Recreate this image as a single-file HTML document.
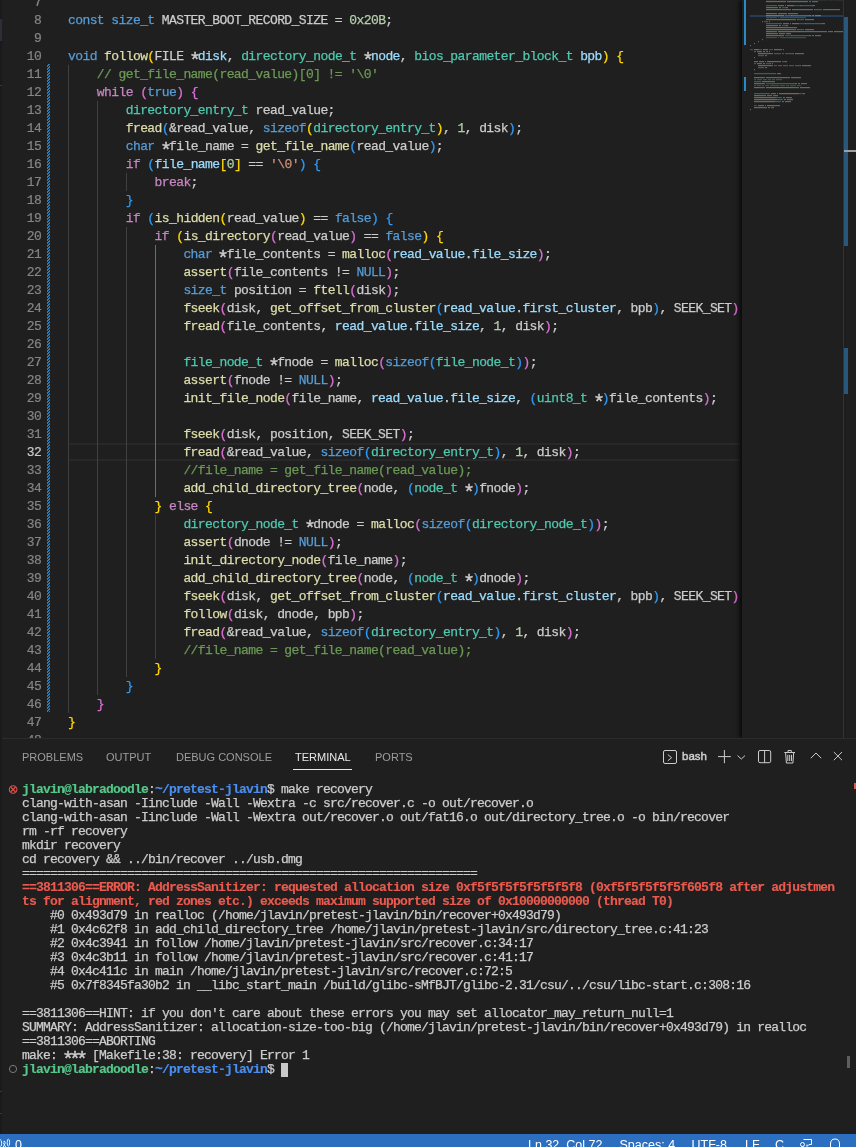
<!DOCTYPE html>
<html><head><meta charset="utf-8">
<style>
*{margin:0;padding:0;box-sizing:border-box}
html,body{width:856px;height:1147px;overflow:hidden;background:#1f1f1f}
body{position:relative;will-change:transform;font-family:"Liberation Sans",sans-serif}
.abs{position:absolute}
#editor{position:absolute;left:0;top:0;width:856px;height:738px;background:#1f1f1f;overflow:hidden}
.ln{position:absolute;left:0;width:41.2px;text-align:right;font-family:"Liberation Mono",monospace;font-size:13px;letter-spacing:-0.6px;color:#858585;height:18px;line-height:18px;-webkit-text-stroke:0.2px}
.ln.cur{color:#cccccc}
#code{position:absolute;left:68px;top:1px;width:672px;height:737px;overflow:hidden}
.cl{position:absolute;left:0;white-space:pre;font-family:"Liberation Mono",monospace;font-size:13px;letter-spacing:-0.59px;height:18px;line-height:18px;color:#cccccc;-webkit-text-stroke:0.25px}
.k{color:#569cd6}.c{color:#c586c0}.t{color:#4ec9b0}.f{color:#dcdcaa}.v{color:#9cdcfe}.n{color:#b5cea8}.s{color:#ce9178}.m{color:#6a9955}
.b1{color:#ffd700}.b2{color:#da70d6}.b3{color:#2f9bf5}
.ast{display:inline-block;transform:translateY(5.5px) scale(1.55)}.guide{position:absolute;width:1px;background:#404040}
#panel{position:absolute;left:0;top:738px;width:856px;height:396px;background:#1f1f1f;border-top:1px solid #2b2b2b}
.tab{position:absolute;top:11px;font-size:11px;color:#9d9d9d;line-height:14px}
.tl{position:absolute;left:22px;white-space:pre;font-family:"Liberation Mono",monospace;font-size:13px;letter-spacing:-0.8px;height:14px;line-height:14px;color:#cccccc;-webkit-text-stroke:0.25px}
.g{color:#55c88a;font-weight:bold;-webkit-text-stroke:0.15px}.bl{color:#4a8ef0;font-weight:bold;-webkit-text-stroke:0.15px}.r{color:#eb5a4e;font-weight:bold;-webkit-text-stroke:0.15px}.tcur{display:inline-block;width:7px;height:14px;background:#c8c8c8;vertical-align:top}
#status{position:absolute;left:0;top:1134px;width:856px;height:13px;background:#2c6ec0;color:#fff;font-size:12px}
</style></head><body>
<div id="editor"><div class="ln" style="top:-6px">7</div><div class="ln" style="top:12px">8</div><div class="ln" style="top:30px">9</div><div class="ln" style="top:48px">10</div><div class="ln" style="top:66px">11</div><div class="ln" style="top:84px">12</div><div class="ln" style="top:102px">13</div><div class="ln" style="top:120px">14</div><div class="ln" style="top:138px">15</div><div class="ln" style="top:156px">16</div><div class="ln" style="top:174px">17</div><div class="ln" style="top:192px">18</div><div class="ln" style="top:210px">19</div><div class="ln" style="top:228px">20</div><div class="ln" style="top:246px">21</div><div class="ln" style="top:264px">22</div><div class="ln" style="top:282px">23</div><div class="ln" style="top:300px">24</div><div class="ln" style="top:318px">25</div><div class="ln" style="top:336px">26</div><div class="ln" style="top:354px">27</div><div class="ln" style="top:372px">28</div><div class="ln" style="top:390px">29</div><div class="ln" style="top:408px">30</div><div class="ln" style="top:426px">31</div><div class="ln cur" style="top:444px">32</div><div class="ln" style="top:462px">33</div><div class="ln" style="top:480px">34</div><div class="ln" style="top:498px">35</div><div class="ln" style="top:516px">36</div><div class="ln" style="top:534px">37</div><div class="ln" style="top:552px">38</div><div class="ln" style="top:570px">39</div><div class="ln" style="top:588px">40</div><div class="ln" style="top:606px">41</div><div class="ln" style="top:624px">42</div><div class="ln" style="top:642px">43</div><div class="ln" style="top:660px">44</div><div class="ln" style="top:678px">45</div><div class="ln" style="top:696px">46</div><div class="ln" style="top:714px">47</div><div class="ln" style="top:732px">48</div><div class="abs" style="left:68px;top:443px;width:672px;height:18px;border-top:2px solid #282828;border-bottom:2px solid #282828"></div><div class="guide" style="left:68px;top:65px;height:648px;background:#404040"></div><div class="guide" style="left:97px;top:101px;height:594px;background:#404040"></div><div class="guide" style="left:126px;top:173px;height:18px;background:#404040"></div><div class="guide" style="left:126px;top:227px;height:450px;background:#404040"></div><div class="guide" style="left:155px;top:245px;height:252px;background:#6e6e6e"></div><div class="guide" style="left:155px;top:515px;height:144px;background:#404040"></div><div class="abs" style="left:47px;top:64px;width:3px;height:648px;background:repeating-linear-gradient(-45deg,#2b7cb8 0 1.2px,#1f1f1f 1.2px 2.12px)"></div><div id="code"><div class="cl" style="top:-7px"></div><div class="cl" style="top:11px"><span class="k">const</span> <span class="k">size_t</span> MASTER_BOOT_RECORD_SIZE = <span class="n">0x20B</span>;</div><div class="cl" style="top:29px"></div><div class="cl" style="top:47px"><span class="k">void</span> <span class="f">follow</span><span class="b1">(</span>FILE <span class="ast">*</span><span class="v">disk</span>, <span class="t">directory_node_t</span> <span class="ast">*</span><span class="v">node</span>, <span class="t">bios_parameter_block_t</span> <span class="v">bpb</span><span class="b1">)</span> <span class="b1">{</span></div><div class="cl" style="top:65px">    <span class="m">// get_file_name(read_value)[0] != '\0'</span></div><div class="cl" style="top:83px">    <span class="c">while</span> <span class="b2">(</span><span class="k">true</span><span class="b2">)</span> <span class="b2">{</span></div><div class="cl" style="top:101px">        <span class="t">directory_entry_t</span> read_value;</div><div class="cl" style="top:119px">        <span class="f">fread</span><span class="b3">(</span>&amp;read_value, <span class="k">sizeof</span><span class="b1">(</span><span class="t">directory_entry_t</span><span class="b1">)</span>, <span class="n">1</span>, disk<span class="b3">)</span>;</div><div class="cl" style="top:137px">        <span class="k">char</span> <span class="ast">*</span>file_name = <span class="f">get_file_name</span><span class="b3">(</span>read_value<span class="b3">)</span>;</div><div class="cl" style="top:155px">        <span class="c">if</span> <span class="b3">(</span><span class="v">file_name</span><span class="b1">[</span><span class="n">0</span><span class="b1">]</span> == <span class="s">'\0'</span><span class="b3">)</span> <span class="b3">{</span></div><div class="cl" style="top:173px">            <span class="c">break</span>;</div><div class="cl" style="top:191px">        <span class="b3">}</span></div><div class="cl" style="top:209px">        <span class="c">if</span> <span class="b3">(</span><span class="f">is_hidden</span><span class="b1">(</span>read_value<span class="b1">)</span> == <span class="k">false</span><span class="b3">)</span> <span class="b3">{</span></div><div class="cl" style="top:227px">            <span class="c">if</span> <span class="b1">(</span><span class="f">is_directory</span><span class="b2">(</span>read_value<span class="b2">)</span> == <span class="k">false</span><span class="b1">)</span> <span class="b1">{</span></div><div class="cl" style="top:245px">                <span class="k">char</span> <span class="ast">*</span>file_contents = <span class="f">malloc</span><span class="b2">(</span><span class="v">read_value</span>.<span class="v">file_size</span><span class="b2">)</span>;</div><div class="cl" style="top:263px">                <span class="f">assert</span><span class="b2">(</span>file_contents != <span class="k">NULL</span><span class="b2">)</span>;</div><div class="cl" style="top:281px">                <span class="k">size_t</span> position = <span class="f">ftell</span><span class="b2">(</span>disk<span class="b2">)</span>;</div><div class="cl" style="top:299px">                <span class="f">fseek</span><span class="b2">(</span>disk, <span class="f">get_offset_from_cluster</span><span class="b3">(</span><span class="v">read_value</span>.<span class="v">first_cluster</span>, bpb<span class="b3">)</span>, SEEK_SET<span class="b2">)</span>;</div><div class="cl" style="top:317px">                <span class="f">fread</span><span class="b2">(</span>file_contents, <span class="v">read_value</span>.<span class="v">file_size</span>, <span class="n">1</span>, disk<span class="b2">)</span>;</div><div class="cl" style="top:335px"></div><div class="cl" style="top:353px">                <span class="t">file_node_t</span> <span class="ast">*</span>fnode = <span class="f">malloc</span><span class="b2">(</span><span class="k">sizeof</span><span class="b3">(</span><span class="t">file_node_t</span><span class="b3">)</span><span class="b2">)</span>;</div><div class="cl" style="top:371px">                <span class="f">assert</span><span class="b2">(</span>fnode != <span class="k">NULL</span><span class="b2">)</span>;</div><div class="cl" style="top:389px">                <span class="f">init_file_node</span><span class="b2">(</span>file_name, <span class="v">read_value</span>.<span class="v">file_size</span>, <span class="b3">(</span><span class="t">uint8_t</span> <span class="ast">*</span><span class="b3">)</span>file_contents<span class="b2">)</span>;</div><div class="cl" style="top:407px"></div><div class="cl" style="top:425px">                <span class="f">fseek</span><span class="b2">(</span>disk, position, SEEK_SET<span class="b2">)</span>;</div><div class="cl" style="top:443px">                <span class="f">fread</span><span class="b2">(</span>&amp;read_value, <span class="k">sizeof</span><span class="b3">(</span><span class="t">directory_entry_t</span><span class="b3">)</span>, <span class="n">1</span>, disk<span class="b2">)</span>;</div><div class="cl" style="top:461px">                <span class="m">//file_name = get_file_name(read_value);</span></div><div class="cl" style="top:479px">                <span class="f">add_child_directory_tree</span><span class="b2">(</span>node, <span class="b3">(</span><span class="t">node_t</span> <span class="ast">*</span><span class="b3">)</span>fnode<span class="b2">)</span>;</div><div class="cl" style="top:497px">            <span class="b1">}</span> <span class="c">else</span> <span class="b1">{</span></div><div class="cl" style="top:515px">                <span class="t">directory_node_t</span> <span class="ast">*</span>dnode = <span class="f">malloc</span><span class="b2">(</span><span class="k">sizeof</span><span class="b3">(</span><span class="t">directory_node_t</span><span class="b3">)</span><span class="b2">)</span>;</div><div class="cl" style="top:533px">                <span class="f">assert</span><span class="b2">(</span>dnode != <span class="k">NULL</span><span class="b2">)</span>;</div><div class="cl" style="top:551px">                <span class="f">init_directory_node</span><span class="b2">(</span>file_name<span class="b2">)</span>;</div><div class="cl" style="top:569px">                <span class="f">add_child_directory_tree</span><span class="b2">(</span>node, <span class="b3">(</span><span class="t">node_t</span> <span class="ast">*</span><span class="b3">)</span>dnode<span class="b2">)</span>;</div><div class="cl" style="top:587px">                <span class="f">fseek</span><span class="b2">(</span>disk, <span class="f">get_offset_from_cluster</span><span class="b3">(</span><span class="v">read_value</span>.<span class="v">first_cluster</span>, bpb<span class="b3">)</span>, SEEK_SET<span class="b2">)</span>;</div><div class="cl" style="top:605px">                <span class="f">follow</span><span class="b2">(</span>disk, dnode, bpb<span class="b2">)</span>;</div><div class="cl" style="top:623px">                <span class="f">fread</span><span class="b2">(</span>&amp;read_value, <span class="k">sizeof</span><span class="b3">(</span><span class="t">directory_entry_t</span><span class="b3">)</span>, <span class="n">1</span>, disk<span class="b2">)</span>;</div><div class="cl" style="top:641px">                <span class="m">//file_name = get_file_name(read_value);</span></div><div class="cl" style="top:659px">            <span class="b1">}</span></div><div class="cl" style="top:677px">        <span class="b3">}</span></div><div class="cl" style="top:695px">    <span class="b2">}</span></div><div class="cl" style="top:713px"><span class="b1">}</span></div><div class="cl" style="top:731px"></div></div><div class="abs" style="left:0;top:0;width:2px;height:1134px;background:#1a1a1a"></div><div class="abs" style="left:0;top:19px;width:2px;height:22px;background:#2e2e36"></div><div class="abs" style="left:0;top:85px;width:2px;height:1px;background:#3a3a3a"></div><div class="abs" style="left:742px;top:0;width:101px;height:738px;background:#1f1f1f;box-shadow:-3px 0 4px #000000a0"></div><div class="abs" style="left:750px;top:15px;width:93px;height:2px;background:#264f78;opacity:.65"></div><svg class="abs" style="left:750px;top:0;opacity:0.4" width="93" height="738"><rect x="16" y="-1" width="5" height="1.2" fill="#dcdcaa"/><rect x="21" y="-1" width="1" height="1.2" fill="#cccccc"/><rect x="22" y="-1" width="5" height="1.2" fill="#cccccc"/><rect x="28" y="-1" width="23" height="1.2" fill="#dcdcaa"/><rect x="51" y="-1" width="1" height="1.2" fill="#cccccc"/><rect x="52" y="-1" width="10" height="1.2" fill="#9cdcfe"/><rect x="62" y="-1" width="1" height="1.2" fill="#cccccc"/><rect x="63" y="-1" width="13" height="1.2" fill="#9cdcfe"/><rect x="76" y="-1" width="1" height="1.2" fill="#cccccc"/><rect x="78" y="-1" width="3" height="1.2" fill="#cccccc"/><rect x="81" y="-1" width="1" height="1.2" fill="#cccccc"/><rect x="82" y="-1" width="1" height="1.2" fill="#cccccc"/><rect x="84" y="-1" width="8" height="1.2" fill="#cccccc"/><rect x="92" y="-1" width="1" height="1.2" fill="#cccccc"/><rect x="93" y="-1" width="1" height="1.2" fill="#cccccc"/><rect x="16" y="1" width="5" height="1.2" fill="#dcdcaa"/><rect x="21" y="1" width="1" height="1.2" fill="#cccccc"/><rect x="22" y="1" width="14" height="1.2" fill="#cccccc"/><rect x="37" y="1" width="10" height="1.2" fill="#9cdcfe"/><rect x="47" y="1" width="1" height="1.2" fill="#cccccc"/><rect x="48" y="1" width="9" height="1.2" fill="#9cdcfe"/><rect x="57" y="1" width="1" height="1.2" fill="#cccccc"/><rect x="59" y="1" width="1" height="1.2" fill="#b5cea8"/><rect x="60" y="1" width="1" height="1.2" fill="#cccccc"/><rect x="62" y="1" width="4" height="1.2" fill="#cccccc"/><rect x="66" y="1" width="1" height="1.2" fill="#cccccc"/><rect x="67" y="1" width="1" height="1.2" fill="#cccccc"/><rect x="16" y="5" width="11" height="1.2" fill="#4ec9b0"/><rect x="28" y="5" width="6" height="1.2" fill="#cccccc"/><rect x="35" y="5" width="1" height="1.2" fill="#cccccc"/><rect x="37" y="5" width="6" height="1.2" fill="#dcdcaa"/><rect x="43" y="5" width="1" height="1.2" fill="#cccccc"/><rect x="44" y="5" width="6" height="1.2" fill="#569cd6"/><rect x="50" y="5" width="1" height="1.2" fill="#cccccc"/><rect x="51" y="5" width="11" height="1.2" fill="#4ec9b0"/><rect x="62" y="5" width="1" height="1.2" fill="#cccccc"/><rect x="63" y="5" width="1" height="1.2" fill="#cccccc"/><rect x="64" y="5" width="1" height="1.2" fill="#cccccc"/><rect x="16" y="7" width="6" height="1.2" fill="#dcdcaa"/><rect x="22" y="7" width="1" height="1.2" fill="#cccccc"/><rect x="23" y="7" width="5" height="1.2" fill="#cccccc"/><rect x="29" y="7" width="2" height="1.2" fill="#cccccc"/><rect x="32" y="7" width="4" height="1.2" fill="#569cd6"/><rect x="36" y="7" width="1" height="1.2" fill="#cccccc"/><rect x="37" y="7" width="1" height="1.2" fill="#cccccc"/><rect x="16" y="9" width="14" height="1.2" fill="#dcdcaa"/><rect x="30" y="9" width="1" height="1.2" fill="#cccccc"/><rect x="31" y="9" width="10" height="1.2" fill="#cccccc"/><rect x="42" y="9" width="10" height="1.2" fill="#9cdcfe"/><rect x="52" y="9" width="1" height="1.2" fill="#cccccc"/><rect x="53" y="9" width="9" height="1.2" fill="#9cdcfe"/><rect x="62" y="9" width="1" height="1.2" fill="#cccccc"/><rect x="64" y="9" width="1" height="1.2" fill="#cccccc"/><rect x="65" y="9" width="7" height="1.2" fill="#4ec9b0"/><rect x="73" y="9" width="1" height="1.2" fill="#cccccc"/><rect x="74" y="9" width="1" height="1.2" fill="#cccccc"/><rect x="75" y="9" width="13" height="1.2" fill="#cccccc"/><rect x="88" y="9" width="1" height="1.2" fill="#cccccc"/><rect x="89" y="9" width="1" height="1.2" fill="#cccccc"/><rect x="16" y="13" width="5" height="1.2" fill="#dcdcaa"/><rect x="21" y="13" width="1" height="1.2" fill="#cccccc"/><rect x="22" y="13" width="5" height="1.2" fill="#cccccc"/><rect x="28" y="13" width="9" height="1.2" fill="#cccccc"/><rect x="38" y="13" width="8" height="1.2" fill="#cccccc"/><rect x="46" y="13" width="1" height="1.2" fill="#cccccc"/><rect x="47" y="13" width="1" height="1.2" fill="#cccccc"/><rect x="16" y="15" width="5" height="1.2" fill="#dcdcaa"/><rect x="21" y="15" width="1" height="1.2" fill="#cccccc"/><rect x="22" y="15" width="12" height="1.2" fill="#cccccc"/><rect x="35" y="15" width="6" height="1.2" fill="#569cd6"/><rect x="41" y="15" width="1" height="1.2" fill="#cccccc"/><rect x="42" y="15" width="17" height="1.2" fill="#4ec9b0"/><rect x="59" y="15" width="1" height="1.2" fill="#cccccc"/><rect x="60" y="15" width="1" height="1.2" fill="#cccccc"/><rect x="62" y="15" width="1" height="1.2" fill="#b5cea8"/><rect x="63" y="15" width="1" height="1.2" fill="#cccccc"/><rect x="65" y="15" width="4" height="1.2" fill="#cccccc"/><rect x="69" y="15" width="1" height="1.2" fill="#cccccc"/><rect x="70" y="15" width="1" height="1.2" fill="#cccccc"/><rect x="16" y="17" width="11" height="1.2" fill="#6a9955"/><rect x="28" y="17" width="1" height="1.2" fill="#6a9955"/><rect x="30" y="17" width="26" height="1.2" fill="#6a9955"/><rect x="16" y="19" width="24" height="1.2" fill="#dcdcaa"/><rect x="40" y="19" width="1" height="1.2" fill="#cccccc"/><rect x="41" y="19" width="5" height="1.2" fill="#cccccc"/><rect x="47" y="19" width="1" height="1.2" fill="#cccccc"/><rect x="48" y="19" width="6" height="1.2" fill="#4ec9b0"/><rect x="55" y="19" width="1" height="1.2" fill="#cccccc"/><rect x="56" y="19" width="1" height="1.2" fill="#cccccc"/><rect x="57" y="19" width="5" height="1.2" fill="#cccccc"/><rect x="62" y="19" width="1" height="1.2" fill="#cccccc"/><rect x="63" y="19" width="1" height="1.2" fill="#cccccc"/><rect x="12" y="21" width="1" height="1.2" fill="#cccccc"/><rect x="14" y="21" width="4" height="1.2" fill="#c586c0"/><rect x="19" y="21" width="1" height="1.2" fill="#cccccc"/><rect x="16" y="23" width="16" height="1.2" fill="#4ec9b0"/><rect x="33" y="23" width="6" height="1.2" fill="#cccccc"/><rect x="40" y="23" width="1" height="1.2" fill="#cccccc"/><rect x="42" y="23" width="6" height="1.2" fill="#dcdcaa"/><rect x="48" y="23" width="1" height="1.2" fill="#cccccc"/><rect x="49" y="23" width="6" height="1.2" fill="#569cd6"/><rect x="55" y="23" width="1" height="1.2" fill="#cccccc"/><rect x="56" y="23" width="16" height="1.2" fill="#4ec9b0"/><rect x="72" y="23" width="1" height="1.2" fill="#cccccc"/><rect x="73" y="23" width="1" height="1.2" fill="#cccccc"/><rect x="74" y="23" width="1" height="1.2" fill="#cccccc"/><rect x="16" y="25" width="6" height="1.2" fill="#dcdcaa"/><rect x="22" y="25" width="1" height="1.2" fill="#cccccc"/><rect x="23" y="25" width="5" height="1.2" fill="#cccccc"/><rect x="29" y="25" width="2" height="1.2" fill="#cccccc"/><rect x="32" y="25" width="4" height="1.2" fill="#569cd6"/><rect x="36" y="25" width="1" height="1.2" fill="#cccccc"/><rect x="37" y="25" width="1" height="1.2" fill="#cccccc"/><rect x="16" y="27" width="19" height="1.2" fill="#dcdcaa"/><rect x="35" y="27" width="1" height="1.2" fill="#cccccc"/><rect x="36" y="27" width="9" height="1.2" fill="#cccccc"/><rect x="45" y="27" width="1" height="1.2" fill="#cccccc"/><rect x="46" y="27" width="1" height="1.2" fill="#cccccc"/><rect x="16" y="29" width="24" height="1.2" fill="#dcdcaa"/><rect x="40" y="29" width="1" height="1.2" fill="#cccccc"/><rect x="41" y="29" width="5" height="1.2" fill="#cccccc"/><rect x="47" y="29" width="1" height="1.2" fill="#cccccc"/><rect x="48" y="29" width="6" height="1.2" fill="#4ec9b0"/><rect x="55" y="29" width="1" height="1.2" fill="#cccccc"/><rect x="56" y="29" width="1" height="1.2" fill="#cccccc"/><rect x="57" y="29" width="5" height="1.2" fill="#cccccc"/><rect x="62" y="29" width="1" height="1.2" fill="#cccccc"/><rect x="63" y="29" width="1" height="1.2" fill="#cccccc"/><rect x="16" y="31" width="5" height="1.2" fill="#dcdcaa"/><rect x="21" y="31" width="1" height="1.2" fill="#cccccc"/><rect x="22" y="31" width="5" height="1.2" fill="#cccccc"/><rect x="28" y="31" width="23" height="1.2" fill="#dcdcaa"/><rect x="51" y="31" width="1" height="1.2" fill="#cccccc"/><rect x="52" y="31" width="10" height="1.2" fill="#9cdcfe"/><rect x="62" y="31" width="1" height="1.2" fill="#cccccc"/><rect x="63" y="31" width="13" height="1.2" fill="#9cdcfe"/><rect x="76" y="31" width="1" height="1.2" fill="#cccccc"/><rect x="78" y="31" width="3" height="1.2" fill="#cccccc"/><rect x="81" y="31" width="1" height="1.2" fill="#cccccc"/><rect x="82" y="31" width="1" height="1.2" fill="#cccccc"/><rect x="84" y="31" width="8" height="1.2" fill="#cccccc"/><rect x="92" y="31" width="1" height="1.2" fill="#cccccc"/><rect x="93" y="31" width="1" height="1.2" fill="#cccccc"/><rect x="16" y="33" width="6" height="1.2" fill="#dcdcaa"/><rect x="22" y="33" width="1" height="1.2" fill="#cccccc"/><rect x="23" y="33" width="5" height="1.2" fill="#cccccc"/><rect x="29" y="33" width="6" height="1.2" fill="#cccccc"/><rect x="36" y="33" width="3" height="1.2" fill="#cccccc"/><rect x="39" y="33" width="1" height="1.2" fill="#cccccc"/><rect x="40" y="33" width="1" height="1.2" fill="#cccccc"/><rect x="16" y="35" width="5" height="1.2" fill="#dcdcaa"/><rect x="21" y="35" width="1" height="1.2" fill="#cccccc"/><rect x="22" y="35" width="12" height="1.2" fill="#cccccc"/><rect x="35" y="35" width="6" height="1.2" fill="#569cd6"/><rect x="41" y="35" width="1" height="1.2" fill="#cccccc"/><rect x="42" y="35" width="17" height="1.2" fill="#4ec9b0"/><rect x="59" y="35" width="1" height="1.2" fill="#cccccc"/><rect x="60" y="35" width="1" height="1.2" fill="#cccccc"/><rect x="62" y="35" width="1" height="1.2" fill="#b5cea8"/><rect x="63" y="35" width="1" height="1.2" fill="#cccccc"/><rect x="65" y="35" width="4" height="1.2" fill="#cccccc"/><rect x="69" y="35" width="1" height="1.2" fill="#cccccc"/><rect x="70" y="35" width="1" height="1.2" fill="#cccccc"/><rect x="16" y="37" width="11" height="1.2" fill="#6a9955"/><rect x="28" y="37" width="1" height="1.2" fill="#6a9955"/><rect x="30" y="37" width="26" height="1.2" fill="#6a9955"/><rect x="12" y="39" width="1" height="1.2" fill="#cccccc"/><rect x="8" y="41" width="1" height="1.2" fill="#cccccc"/><rect x="4" y="43" width="1" height="1.2" fill="#cccccc"/><rect x="0" y="45" width="1" height="1.2" fill="#cccccc"/><rect x="0" y="49" width="3" height="1.2" fill="#569cd6"/><rect x="4" y="49" width="4" height="1.2" fill="#dcdcaa"/><rect x="8" y="49" width="1" height="1.2" fill="#cccccc"/><rect x="9" y="49" width="3" height="1.2" fill="#569cd6"/><rect x="13" y="49" width="4" height="1.2" fill="#9cdcfe"/><rect x="17" y="49" width="1" height="1.2" fill="#cccccc"/><rect x="19" y="49" width="4" height="1.2" fill="#569cd6"/><rect x="24" y="49" width="1" height="1.2" fill="#cccccc"/><rect x="25" y="49" width="4" height="1.2" fill="#9cdcfe"/><rect x="29" y="49" width="1" height="1.2" fill="#cccccc"/><rect x="30" y="49" width="1" height="1.2" fill="#cccccc"/><rect x="31" y="49" width="1" height="1.2" fill="#cccccc"/><rect x="33" y="49" width="1" height="1.2" fill="#cccccc"/><rect x="4" y="51" width="2" height="1.2" fill="#c586c0"/><rect x="7" y="51" width="1" height="1.2" fill="#cccccc"/><rect x="8" y="51" width="4" height="1.2" fill="#cccccc"/><rect x="13" y="51" width="2" height="1.2" fill="#cccccc"/><rect x="16" y="51" width="1" height="1.2" fill="#b5cea8"/><rect x="17" y="51" width="1" height="1.2" fill="#cccccc"/><rect x="19" y="51" width="1" height="1.2" fill="#cccccc"/><rect x="8" y="53" width="7" height="1.2" fill="#dcdcaa"/><rect x="15" y="53" width="1" height="1.2" fill="#cccccc"/><rect x="16" y="53" width="7" height="1.2" fill="#cccccc"/><rect x="24" y="53" width="7" height="1.2" fill="#ce9178"/><rect x="32" y="53" width="2" height="1.2" fill="#ce9178"/><rect x="35" y="53" width="8" height="1.2" fill="#ce9178"/><rect x="43" y="53" width="1" height="1.2" fill="#cccccc"/><rect x="45" y="53" width="4" height="1.2" fill="#9cdcfe"/><rect x="49" y="53" width="1" height="1.2" fill="#cccccc"/><rect x="50" y="53" width="1" height="1.2" fill="#b5cea8"/><rect x="51" y="53" width="1" height="1.2" fill="#cccccc"/><rect x="52" y="53" width="1" height="1.2" fill="#cccccc"/><rect x="53" y="53" width="1" height="1.2" fill="#cccccc"/><rect x="8" y="55" width="6" height="1.2" fill="#c586c0"/><rect x="15" y="55" width="1" height="1.2" fill="#b5cea8"/><rect x="16" y="55" width="1" height="1.2" fill="#cccccc"/><rect x="4" y="57" width="1" height="1.2" fill="#cccccc"/><rect x="4" y="61" width="4" height="1.2" fill="#cccccc"/><rect x="9" y="61" width="5" height="1.2" fill="#cccccc"/><rect x="15" y="61" width="1" height="1.2" fill="#cccccc"/><rect x="17" y="61" width="5" height="1.2" fill="#dcdcaa"/><rect x="22" y="61" width="1" height="1.2" fill="#cccccc"/><rect x="23" y="61" width="4" height="1.2" fill="#9cdcfe"/><rect x="27" y="61" width="1" height="1.2" fill="#cccccc"/><rect x="28" y="61" width="1" height="1.2" fill="#b5cea8"/><rect x="29" y="61" width="1" height="1.2" fill="#cccccc"/><rect x="30" y="61" width="1" height="1.2" fill="#cccccc"/><rect x="32" y="61" width="3" height="1.2" fill="#ce9178"/><rect x="35" y="61" width="1" height="1.2" fill="#cccccc"/><rect x="36" y="61" width="1" height="1.2" fill="#cccccc"/><rect x="4" y="63" width="2" height="1.2" fill="#c586c0"/><rect x="7" y="63" width="1" height="1.2" fill="#cccccc"/><rect x="8" y="63" width="4" height="1.2" fill="#cccccc"/><rect x="13" y="63" width="2" height="1.2" fill="#cccccc"/><rect x="16" y="63" width="4" height="1.2" fill="#569cd6"/><rect x="20" y="63" width="1" height="1.2" fill="#cccccc"/><rect x="22" y="63" width="1" height="1.2" fill="#cccccc"/><rect x="8" y="65" width="7" height="1.2" fill="#dcdcaa"/><rect x="15" y="65" width="1" height="1.2" fill="#cccccc"/><rect x="16" y="65" width="7" height="1.2" fill="#cccccc"/><rect x="24" y="65" width="3" height="1.2" fill="#ce9178"/><rect x="28" y="65" width="4" height="1.2" fill="#ce9178"/><rect x="33" y="65" width="5" height="1.2" fill="#ce9178"/><rect x="39" y="65" width="5" height="1.2" fill="#ce9178"/><rect x="45" y="65" width="5" height="1.2" fill="#ce9178"/><rect x="50" y="65" width="1" height="1.2" fill="#cccccc"/><rect x="52" y="65" width="4" height="1.2" fill="#9cdcfe"/><rect x="56" y="65" width="1" height="1.2" fill="#cccccc"/><rect x="57" y="65" width="1" height="1.2" fill="#b5cea8"/><rect x="58" y="65" width="1" height="1.2" fill="#cccccc"/><rect x="59" y="65" width="1" height="1.2" fill="#cccccc"/><rect x="60" y="65" width="1" height="1.2" fill="#cccccc"/><rect x="8" y="67" width="6" height="1.2" fill="#c586c0"/><rect x="15" y="67" width="1" height="1.2" fill="#b5cea8"/><rect x="16" y="67" width="1" height="1.2" fill="#cccccc"/><rect x="4" y="69" width="1" height="1.2" fill="#cccccc"/><rect x="4" y="73" width="22" height="1.2" fill="#4ec9b0"/><rect x="27" y="73" width="4" height="1.2" fill="#cccccc"/><rect x="4" y="77" width="5" height="1.2" fill="#dcdcaa"/><rect x="9" y="77" width="1" height="1.2" fill="#cccccc"/><rect x="10" y="77" width="5" height="1.2" fill="#cccccc"/><rect x="16" y="77" width="24" height="1.2" fill="#cccccc"/><rect x="41" y="77" width="8" height="1.2" fill="#cccccc"/><rect x="49" y="77" width="1" height="1.2" fill="#cccccc"/><rect x="50" y="77" width="1" height="1.2" fill="#cccccc"/><rect x="4" y="79" width="2" height="1.2" fill="#6a9955"/><rect x="7" y="79" width="5" height="1.2" fill="#6a9955"/><rect x="13" y="79" width="4" height="1.2" fill="#6a9955"/><rect x="18" y="79" width="3" height="1.2" fill="#6a9955"/><rect x="22" y="79" width="3" height="1.2" fill="#6a9955"/><rect x="26" y="79" width="6" height="1.2" fill="#6a9955"/><rect x="4" y="81" width="7" height="1.2" fill="#4ec9b0"/><rect x="12" y="81" width="7" height="1.2" fill="#9cdcfe"/><rect x="19" y="81" width="1" height="1.2" fill="#cccccc"/><rect x="20" y="81" width="3" height="1.2" fill="#b5cea8"/><rect x="23" y="81" width="1" height="1.2" fill="#cccccc"/><rect x="24" y="81" width="1" height="1.2" fill="#cccccc"/><rect x="4" y="83" width="5" height="1.2" fill="#dcdcaa"/><rect x="9" y="83" width="1" height="1.2" fill="#cccccc"/><rect x="10" y="83" width="5" height="1.2" fill="#cccccc"/><rect x="16" y="83" width="6" height="1.2" fill="#569cd6"/><rect x="22" y="83" width="1" height="1.2" fill="#cccccc"/><rect x="23" y="83" width="22" height="1.2" fill="#4ec9b0"/><rect x="45" y="83" width="1" height="1.2" fill="#cccccc"/><rect x="46" y="83" width="1" height="1.2" fill="#cccccc"/><rect x="48" y="83" width="1" height="1.2" fill="#b5cea8"/><rect x="49" y="83" width="1" height="1.2" fill="#cccccc"/><rect x="51" y="83" width="4" height="1.2" fill="#cccccc"/><rect x="55" y="83" width="1" height="1.2" fill="#cccccc"/><rect x="56" y="83" width="1" height="1.2" fill="#cccccc"/><rect x="4" y="85" width="2" height="1.2" fill="#6a9955"/><rect x="7" y="85" width="4" height="1.2" fill="#6a9955"/><rect x="12" y="85" width="2" height="1.2" fill="#6a9955"/><rect x="15" y="85" width="4" height="1.2" fill="#6a9955"/><rect x="20" y="85" width="9" height="1.2" fill="#6a9955"/><rect x="30" y="85" width="5" height="1.2" fill="#6a9955"/><rect x="36" y="85" width="3" height="1.2" fill="#6a9955"/><rect x="40" y="85" width="6" height="1.2" fill="#6a9955"/><rect x="47" y="85" width="4" height="1.2" fill="#6a9955"/><rect x="4" y="87" width="5" height="1.2" fill="#dcdcaa"/><rect x="9" y="87" width="1" height="1.2" fill="#cccccc"/><rect x="10" y="87" width="5" height="1.2" fill="#cccccc"/><rect x="16" y="87" width="27" height="1.2" fill="#dcdcaa"/><rect x="43" y="87" width="1" height="1.2" fill="#cccccc"/><rect x="44" y="87" width="3" height="1.2" fill="#cccccc"/><rect x="47" y="87" width="1" height="1.2" fill="#cccccc"/><rect x="48" y="87" width="1" height="1.2" fill="#cccccc"/><rect x="50" y="87" width="8" height="1.2" fill="#cccccc"/><rect x="58" y="87" width="1" height="1.2" fill="#cccccc"/><rect x="59" y="87" width="1" height="1.2" fill="#cccccc"/><rect x="4" y="93" width="16" height="1.2" fill="#4ec9b0"/><rect x="21" y="93" width="5" height="1.2" fill="#cccccc"/><rect x="27" y="93" width="1" height="1.2" fill="#cccccc"/><rect x="29" y="93" width="19" height="1.2" fill="#dcdcaa"/><rect x="48" y="93" width="1" height="1.2" fill="#cccccc"/><rect x="49" y="93" width="4" height="1.2" fill="#569cd6"/><rect x="53" y="93" width="1" height="1.2" fill="#cccccc"/><rect x="54" y="93" width="1" height="1.2" fill="#cccccc"/><rect x="4" y="95" width="6" height="1.2" fill="#dcdcaa"/><rect x="10" y="95" width="1" height="1.2" fill="#cccccc"/><rect x="11" y="95" width="5" height="1.2" fill="#cccccc"/><rect x="17" y="95" width="5" height="1.2" fill="#cccccc"/><rect x="23" y="95" width="3" height="1.2" fill="#cccccc"/><rect x="26" y="95" width="1" height="1.2" fill="#cccccc"/><rect x="27" y="95" width="1" height="1.2" fill="#cccccc"/><rect x="4" y="97" width="20" height="1.2" fill="#dcdcaa"/><rect x="24" y="97" width="1" height="1.2" fill="#cccccc"/><rect x="25" y="97" width="1" height="1.2" fill="#cccccc"/><rect x="26" y="97" width="6" height="1.2" fill="#4ec9b0"/><rect x="33" y="97" width="1" height="1.2" fill="#cccccc"/><rect x="34" y="97" width="1" height="1.2" fill="#cccccc"/><rect x="36" y="97" width="4" height="1.2" fill="#cccccc"/><rect x="40" y="97" width="1" height="1.2" fill="#cccccc"/><rect x="41" y="97" width="1" height="1.2" fill="#cccccc"/><rect x="4" y="99" width="21" height="1.2" fill="#dcdcaa"/><rect x="25" y="99" width="1" height="1.2" fill="#cccccc"/><rect x="26" y="99" width="1" height="1.2" fill="#cccccc"/><rect x="27" y="99" width="6" height="1.2" fill="#4ec9b0"/><rect x="34" y="99" width="1" height="1.2" fill="#cccccc"/><rect x="35" y="99" width="1" height="1.2" fill="#cccccc"/><rect x="37" y="99" width="4" height="1.2" fill="#cccccc"/><rect x="41" y="99" width="1" height="1.2" fill="#cccccc"/><rect x="42" y="99" width="1" height="1.2" fill="#cccccc"/><rect x="4" y="101" width="19" height="1.2" fill="#dcdcaa"/><rect x="23" y="101" width="1" height="1.2" fill="#cccccc"/><rect x="24" y="101" width="1" height="1.2" fill="#cccccc"/><rect x="25" y="101" width="6" height="1.2" fill="#4ec9b0"/><rect x="32" y="101" width="1" height="1.2" fill="#cccccc"/><rect x="33" y="101" width="1" height="1.2" fill="#cccccc"/><rect x="35" y="101" width="4" height="1.2" fill="#cccccc"/><rect x="39" y="101" width="1" height="1.2" fill="#cccccc"/><rect x="40" y="101" width="1" height="1.2" fill="#cccccc"/><rect x="4" y="105" width="3" height="1.2" fill="#569cd6"/><rect x="8" y="105" width="6" height="1.2" fill="#cccccc"/><rect x="15" y="105" width="1" height="1.2" fill="#cccccc"/><rect x="17" y="105" width="6" height="1.2" fill="#dcdcaa"/><rect x="23" y="105" width="1" height="1.2" fill="#cccccc"/><rect x="24" y="105" width="4" height="1.2" fill="#cccccc"/><rect x="28" y="105" width="1" height="1.2" fill="#cccccc"/><rect x="29" y="105" width="1" height="1.2" fill="#cccccc"/><rect x="4" y="107" width="6" height="1.2" fill="#dcdcaa"/><rect x="10" y="107" width="1" height="1.2" fill="#cccccc"/><rect x="11" y="107" width="6" height="1.2" fill="#cccccc"/><rect x="18" y="107" width="2" height="1.2" fill="#cccccc"/><rect x="21" y="107" width="1" height="1.2" fill="#b5cea8"/><rect x="22" y="107" width="1" height="1.2" fill="#cccccc"/><rect x="23" y="107" width="1" height="1.2" fill="#cccccc"/><rect x="0" y="109" width="1" height="1.2" fill="#cccccc"/></svg><div class="abs" style="left:744px;top:0;width:2px;height:45px;background:#2a8ac8"></div><div class="abs" style="left:744px;top:77px;width:2px;height:14px;background:#2a8ac8"></div><div class="abs" style="left:843px;top:0;width:1px;height:738px;background:#333333"></div><div class="abs" style="left:844px;top:17px;width:4px;height:229px;background:#28587c"></div><div class="abs" style="left:844px;top:348px;width:4px;height:46px;background:#28587c"></div><div class="abs" style="left:844px;top:150px;width:12px;height:2px;background:#a0a0a0"></div></div>
<div id="panel"><div class="tab" style="left:22px;color:#9d9d9d">PROBLEMS</div><div class="tab" style="left:106px;color:#9d9d9d">OUTPUT</div><div class="tab" style="left:176px;color:#9d9d9d">DEBUG CONSOLE</div><div class="tab" style="left:295px;color:#e7e7e7">TERMINAL</div><div class="tab" style="left:375px;color:#9d9d9d">PORTS</div><div class="abs" style="left:293px;top:30px;width:59px;height:1px;background:#e7e7e7"></div><div class="tl" style="top:44px"><span class="g">jlavin@labradoodle</span>:<span class="bl">~/pretest-jlavin</span>$ make recovery</div><div class="tl" style="top:58px">clang-with-asan -Iinclude -Wall -Wextra -c src/recover.c -o out/recover.o</div><div class="tl" style="top:72px">clang-with-asan -Iinclude -Wall -Wextra out/recover.o out/fat16.o out/directory_tree.o -o bin/recover</div><div class="tl" style="top:86px">rm -rf recovery</div><div class="tl" style="top:100px">mkdir recovery</div><div class="tl" style="top:114px">cd recovery &amp;&amp; ../bin/recover ../usb.dmg</div><div class="tl" style="top:128px">=================================================================</div><div class="tl" style="top:142px"><span class="r">==3811306==ERROR: AddressSanitizer: requested allocation size 0xf5f5f5f5f5f5f5f8 (0xf5f5f5f5f5f605f8 after adjustmen</span></div><div class="tl" style="top:156px"><span class="r">ts for alignment, red zones etc.) exceeds maximum supported size of 0x10000000000 (thread T0)</span></div><div class="tl" style="top:170px">    #0 0x493d79 in realloc (/home/jlavin/pretest-jlavin/bin/recover+0x493d79)</div><div class="tl" style="top:184px">    #1 0x4c62f8 in add_child_directory_tree /home/jlavin/pretest-jlavin/src/directory_tree.c:41:23</div><div class="tl" style="top:198px">    #2 0x4c3941 in follow /home/jlavin/pretest-jlavin/src/recover.c:34:17</div><div class="tl" style="top:212px">    #3 0x4c3b11 in follow /home/jlavin/pretest-jlavin/src/recover.c:41:17</div><div class="tl" style="top:226px">    #4 0x4c411c in main /home/jlavin/pretest-jlavin/src/recover.c:72:5</div><div class="tl" style="top:240px">    #5 0x7f8345fa30b2 in __libc_start_main /build/glibc-sMfBJT/glibc-2.31/csu/../csu/libc-start.c:308:16</div><div class="tl" style="top:254px"></div><div class="tl" style="top:268px">==3811306==HINT: if you don't care about these errors you may set allocator_may_return_null=1</div><div class="tl" style="top:282px">SUMMARY: AddressSanitizer: allocation-size-too-big (/home/jlavin/pretest-jlavin/bin/recover+0x493d79) in realloc</div><div class="tl" style="top:296px">==3811306==ABORTING</div><div class="tl" style="top:310px">make: <span class="ast">*</span><span class="ast">*</span><span class="ast">*</span> [Makefile:38: recovery] Error 1</div><div class="tl" style="top:324px"><span class="g">jlavin@labradoodle</span>:<span class="bl">~/pretest-jlavin</span>$ <span class="tcur"></span></div><div class="abs" style="left:0;top:-1px;width:2px;height:396px;background:#1a1a1a"></div><div class="abs" style="left:0;top:352px;width:2px;height:1px;background:#3a3a3a"></div><div class="abs" style="left:0;top:374px;width:2px;height:1px;background:#3a3a3a"></div><svg class="abs" style="left:7px;top:44px" width="12" height="12" viewBox="0 0 12 12"><circle cx="6.1" cy="6.5" r="3.8" fill="none" stroke="#e5534b" stroke-width="1.1"/><path d="M3.6 4L8.6 9M8.6 4L3.6 9" stroke="#e5534b" stroke-width="1.1"/></svg><svg class="abs" style="left:7px;top:324px" width="12" height="12" viewBox="0 0 12 12"><circle cx="6" cy="6" r="3.6" fill="none" stroke="#7a7a7a" stroke-width="1"/></svg><svg class="abs" style="left:0;top:-1px" width="856" height="40" viewBox="0 738 856 40" fill="none" stroke="#cccccc" stroke-width="1"><rect x="663.5" y="750.5" width="13" height="13" rx="1.5"/><path d="M667.8 754.6L671.6 757.7L667.8 760.8"/><path d="M724.4 750V763.2M718 756.6H730.8"/><path d="M737.6 755.6L741.3 759L745 755.6"/><rect x="758.5" y="750.5" width="12.2" height="12.2" rx="1.5"/><path d="M764.6 750.5V762.7"/><path d="M784.3 752.5H795M788 752.5V750.5H791.3V752.5M785.6 752.8L786.4 763H792.9L793.7 752.8M787.8 754.8V761M789.65 754.8V761M791.5 754.8V761"/><path d="M810.8 758.2L816 753L821.2 758.2"/><path d="M833.8 752L842 760.2M842 752L833.8 760.2"/></svg><div class="abs" style="left:682px;top:10px;font-size:11.5px;font-weight:normal;-webkit-text-stroke:0.45px #cccccc;color:#cccccc;line-height:14px">bash</div><div class="abs" style="left:854px;top:44px;width:2px;height:6px;background:#e05a4a"></div><div class="abs" style="left:847px;top:317px;width:3px;height:12px;background:#5e5e5e"></div></div>
<div id="status"><svg class="abs" style="left:0;top:0" width="14" height="13" viewBox="0 0 14 13" fill="none" stroke="#e8f0fa" stroke-width="1"><ellipse cx="0.3" cy="9.3" rx="1.3" ry="3.6"/><ellipse cx="8.4" cy="8.6" rx="1.2" ry="3.6"/><path d="M3.2 8.5L5.6 13M5.6 8.5L3.2 13"/><circle cx="4.4" cy="7.6" r="0.9" fill="#e8f0fa" stroke="none"/></svg><div class="abs" style="left:15px;top:1px;font-size:12.5px;line-height:20px;color:#ffffff">0</div><div class="abs" style="left:528px;top:0.6px;font-size:12.5px;line-height:20px;color:#ffffff;white-space:pre">Ln 32, Col 72</div><div class="abs" style="left:619.5px;top:0.6px;font-size:12.5px;line-height:20px;color:#ffffff;white-space:pre">Spaces: 4</div><div class="abs" style="left:691.5px;top:0.6px;font-size:12.5px;line-height:20px;color:#ffffff;white-space:pre">UTF-8</div><div class="abs" style="left:745px;top:0.6px;font-size:12.5px;line-height:20px;color:#ffffff;white-space:pre">LF</div><div class="abs" style="left:775px;top:0.6px;font-size:12.5px;line-height:20px;color:#ffffff;white-space:pre">C</div><svg class="abs" style="left:799px;top:4px" width="14" height="10" viewBox="0 0 14 10"><path d="M4.5 1.5H12.5V6.5H10L8 8.5V6.5" fill="none" stroke="#ffffff" stroke-width="1"/><circle cx="3.5" cy="6.5" r="2" fill="none" stroke="#ffffff" stroke-width="1"/><path d="M0.5 12Q0.5 9 3.5 9Q6.5 9 6.5 12" fill="none" stroke="#ffffff" stroke-width="1"/></svg><svg class="abs" style="left:829px;top:4px" width="12" height="10" viewBox="0 0 12 10"><path d="M1.5 13V6Q1.5 1 6 1Q10.5 1 10.5 6V13" fill="none" stroke="#ffffff" stroke-width="1"/></svg></div>
</body></html>
